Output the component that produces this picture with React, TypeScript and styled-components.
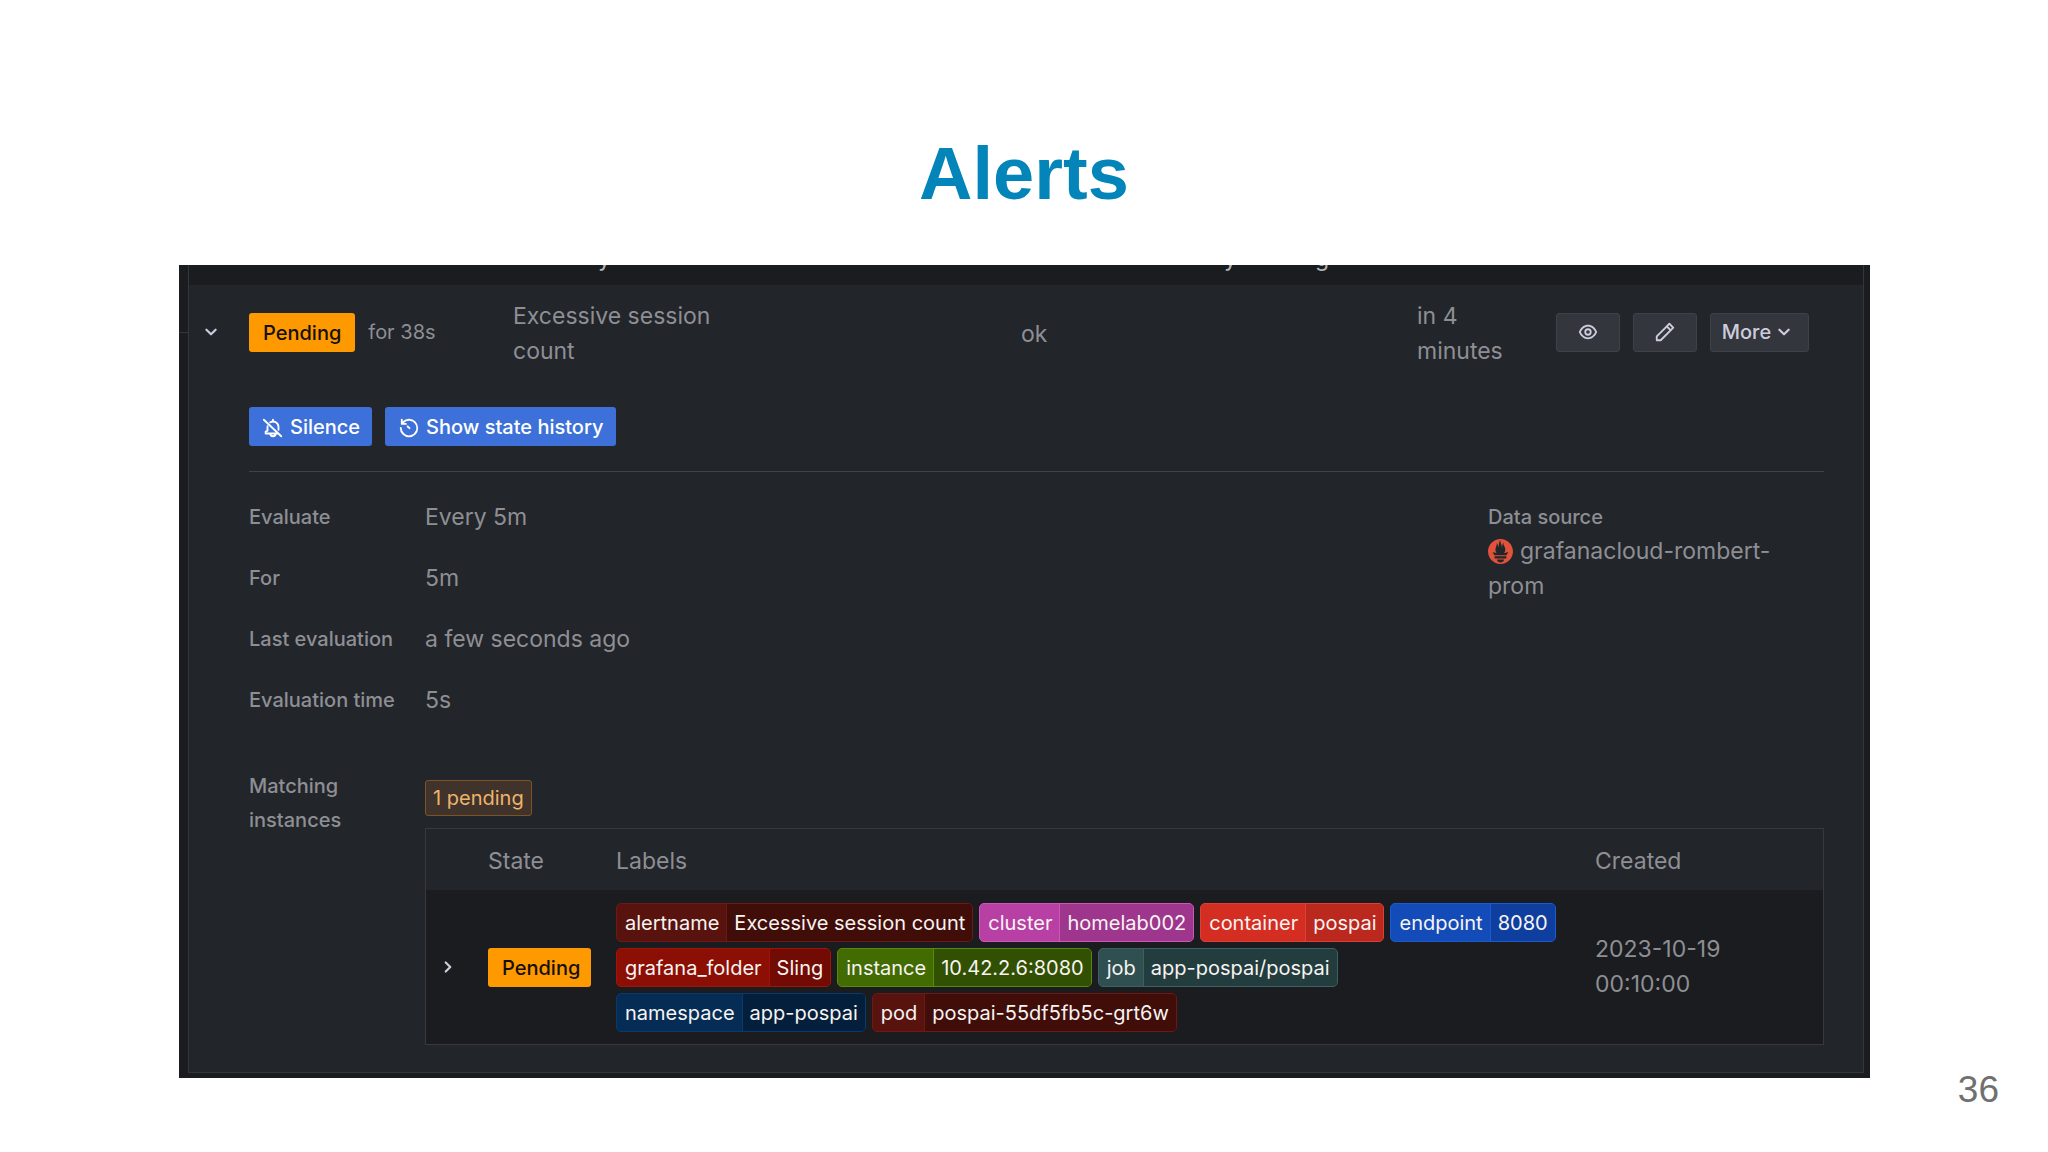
import React from "react";
import styled, { createGlobalStyle, css } from "styled-components";
import { SiPrometheus } from "react-icons/si";

const GlobalStyle = createGlobalStyle`
  *, *::before, *::after { box-sizing: border-box; }
  body { margin: 0; background: #ffffff; }
  button { font: inherit; margin: 0; cursor: pointer; }
`;

const dark = "#1a1c1f";
const panel = "#22252a";
const line = "#33363b";
const muted = "#8e8f94";

const Slide = styled.main`
  display: flex;
  flex-direction: column;
  min-height: 100vh;
  padding-top: 130px;
  background: #ffffff;
  overflow: hidden;
`;

const Title = styled.h1`
  margin: 0 0 47px;
  text-align: center;
  font: 700 74px/88px "Liberation Sans", Arial, sans-serif;
  color: #0385b9;
`;

const Capture = styled.section`
  margin: 0 178px 0 179px;
  padding: 0 6px 5px 0;
  display: grid;
  grid-template-columns: 9px 1fr;
  background: ${dark};
  color: ${muted};
  font: 400 23px/35px Inter, sans-serif;
`;

const Guide = styled.div`
  padding-top: 67px;
  &::before {
    content: "";
    display: block;
    border-top: 1px solid ${line};
  }
`;

const RuleGroup = styled.div`
  border: 1px solid ${line};
  border-top: 0;
`;

const columns = css`
  display: grid;
  grid-template-columns: 60px 264px 216px 292px 1fr 139px 307px;
`;

const CutRow = styled.div`
  ${columns}
  height: 20px;
  overflow: hidden;
  line-height: 20px;
  color: #b4b5bd;
`;

const CutText = styled.div<{ $indent: number }>`
  display: flex;
  gap: 78px;
  margin-top: -17px;
  padding-left: ${(p) => p.$indent}px;
`;

const Expanded = styled.div`
  background: ${panel};
  padding-bottom: 27px;
`;

const RuleRow = styled.div`
  ${columns}
  align-items: center;
  padding: 10px 0 14px;
`;

const TextCell = styled.div`
  padding-top: 4px;
`;

const IconButton = styled.button`
  display: inline-flex;
  align-items: center;
  justify-content: center;
  padding: 0;
  border: 0;
  background: none;
  color: #ccccdc;
`;

const ToggleCell = styled.div`
  display: flex;
  padding-left: 9px;
`;

const StateCell = styled.div`
  display: flex;
  align-items: center;
  gap: 13px;
  font-size: 20px;
`;

const StateTag = styled.span<{ $tight?: boolean }>`
  display: inline-block;
  padding: 2px ${(p) => (p.$tight ? 11 : 14)}px 0 14px;
  height: 39px;
  border-radius: 3px;
  background: #ff9900;
  color: #15110a;
  font-weight: 500;
  font-size: 20px;
  line-height: 37px;
  vertical-align: middle;
`;

const Actions = styled.div`
  display: flex;
  gap: 13px;
`;

const SecondaryButton = styled.button<{ $wide?: boolean }>`
  display: inline-flex;
  align-items: center;
  justify-content: center;
  width: ${(p) => (p.$wide ? 99 : 64)}px;
  height: 39px;
  padding: 0;
  border: 1px solid #3f4148;
  border-radius: 3px;
  background: #34363d;
  color: #ccccdc;
  font-weight: 500;
  font-size: 20px;
`;

const Body = styled.div`
  padding: 24px 39px 0 60px;
`;

const Toolbar = styled.div`
  display: flex;
  gap: 13px;
  padding-bottom: 25px;
  border-bottom: 1px solid #404247;
`;

const PrimaryButton = styled.button`
  display: inline-flex;
  align-items: center;
  gap: 6px;
  height: 39px;
  padding: 2px 12px 0 13px;
  border: 0;
  border-radius: 3px;
  background: #3d71d9;
  color: #ffffff;
  font-weight: 500;
  font-size: 20px;
  line-height: 37px;
`;

const Details = styled.div`
  display: grid;
  grid-template-columns: 1fr 336px;
  padding-top: 28px;
`;

const Facts = styled.dl`
  display: grid;
  gap: 26px;
  margin: 0;
`;

const Fact = styled.div`
  display: grid;
  grid-template-columns: 176px 1fr;
`;

const Term = styled.dt`
  font-weight: 500;
  font-size: 20px;
  line-height: 34px;
`;

const Value = styled.dd`
  margin: 0;
`;

const Source = styled.dl`
  margin: 0;
`;

const SourceValue = styled.dd`
  margin: 0;
  max-width: 300px;
  svg {
    margin-right: 7px;
    vertical-align: -5px;
    color: #e0523a;
  }
`;

const Instances = styled.div`
  display: grid;
  grid-template-columns: 176px minmax(0, 1fr);
  padding-top: 51px;
`;

const InstancesLabel = styled.div`
  max-width: 110px;
  font-weight: 500;
  font-size: 20px;
  line-height: 34px;
`;

const CountBadge = styled.span`
  display: block;
  width: max-content;
  margin: 11px 0 12px;
  padding: 1px 7px 0;
  border: 1px solid #7d5427;
  border-radius: 3px;
  background: #3f332b;
  color: #f0b36c;
  font-size: 20px;
  line-height: 33px;
`;

const Table = styled.table`
  width: 100%;
  border: 1px solid #37393e;
  border-collapse: separate;
  border-spacing: 0;
  table-layout: fixed;
`;

const HeadCell = styled.th<{ $width?: number }>`
  width: ${(p) => (p.$width ? `${p.$width}px` : "auto")};
  height: 61px;
  padding: 3px 0 0;
  text-align: left;
  font-weight: 400;
`;

const Cell = styled.td`
  height: 154px;
  padding: 0;
  background: ${dark};
  vertical-align: middle;
`;

const Stamp = styled.time`
  display: block;
  max-width: 140px;
`;

const TagList = styled.ul`
  display: flex;
  flex-wrap: wrap;
  gap: 6px;
  max-width: 950px;
  margin: 0;
  padding: 0;
  list-style: none;
`;

const Tag = styled.li<{ $fill: string; $edge: string }>`
  display: flex;
  height: 39px;
  overflow: hidden;
  border: 1px solid ${(p) => p.$edge};
  border-radius: 5px;
  background: ${(p) => p.$fill};
  color: #f7f4f2;
  font-size: 20px;
  line-height: 38px;
  white-space: nowrap;
`;

const TagKey = styled.span`
  padding: 0 7px 0 8px;
`;

const TagValue = styled.span<{ $fill: string; $edge: string }>`
  padding: 0 7px;
  border-left: 1px solid ${(p) => p.$edge};
  background: ${(p) => p.$fill};
`;

const PageNumber = styled.footer`
  padding-right: 49px;
  text-align: right;
  font: 400 37px/24px "Liberation Sans", Arial, sans-serif;
  color: #707070;
`;

const Glyph = ({ d, size = 22 }: { d: string; size?: number }) => (
  <svg width={size} height={size} viewBox="0 0 24 24" fill="currentColor" aria-hidden="true">
    <path d={d} />
  </svg>
);

const angleDown =
  "M17,9.17a1,1,0,0,0-1.41,0L12,12.71,8.46,9.17a1,1,0,0,0-1.41,0,1,1,0,0,0,0,1.42l4.24,4.24a1,1,0,0,0,1.42,0L17,10.59A1,1,0,0,0,17,9.17Z";
const angleRight =
  "M14.83,11.29,10.59,7.05a1,1,0,0,0-1.42,0,1,1,0,0,0,0,1.41L12.71,12,9.17,15.54a1,1,0,0,0,0,1.41,1,1,0,0,0,.71.29,1,1,0,0,0,.71-.29l4.24-4.24A1,1,0,0,0,14.83,11.29Z";
const eye =
  "M21.92,11.6C19.9,6.91,16.1,4,12,4S4.1,6.91,2.08,11.6a1,1,0,0,0,0,.8C4.1,17.09,7.9,20,12,20s7.9-2.91,9.92-7.6A1,1,0,0,0,21.92,11.6ZM12,18c-3.17,0-6.17-2.29-7.9-6C5.83,8.29,8.83,6,12,6s6.17,2.29,7.9,6C18.17,15.71,15.17,18,12,18ZM12,8a4,4,0,1,0,4,4A4,4,0,0,0,12,8Zm0,6a2,2,0,1,1,2-2A2,2,0,0,1,12,14Z";
const pen =
  "M22,7.24a1,1,0,0,0-.29-.71L17.47,2.29A1,1,0,0,0,16.76,2a1,1,0,0,0-.71.29L13.22,5.12h0L2.29,16.05a1,1,0,0,0-.29.71V21a1,1,0,0,0,1,1H7.24A1,1,0,0,0,8,21.71L18.87,10.78h0L21.71,8a1.19,1.19,0,0,0,.22-.33,1,1,0,0,0,0-.24.7.7,0,0,0,0-.14ZM6.83,20H4V17.17l9.93-9.93,2.83,2.83ZM18.17,8.66,15.34,5.83l1.42-1.41,2.82,2.82Z";
const history =
  "M12,2A10,10,0,0,0,5.12,4.77V3a1,1,0,0,0-2,0V7.5a1,1,0,0,0,1,1H8.62a1,1,0,0,0,0-2H6.22A8,8,0,1,1,4,12a1,1,0,0,0-2,0A10,10,0,1,0,12,2ZM10.2,9.4a1,1,0,0,0-.4,1.7l2,1.8a1,1,0,0,0,1.4-1.5l-2-1.8a1,1,0,0,0-1-.2Z";

const BellSlash = () => (
  <svg
    width="22"
    height="22"
    viewBox="0 0 24 24"
    fill="none"
    stroke="currentColor"
    strokeWidth="2"
    strokeLinecap="round"
    strokeLinejoin="round"
    aria-hidden="true"
  >
    <path d="M2 3l19 18M12 3v2M9 5.8A6 6 0 0 1 18 11v3M6 10v5l-2 1v2h13M9 18a3 3 0 0 0 6 0" />
  </svg>
);

const facts = [
  ["Evaluate", "Every 5m"],
  ["For", "5m"],
  ["Last evaluation", "a few seconds ago"],
  ["Evaluation time", "5s"],
];

const tags = [
  { k: "alertname", v: "Excessive session count", key: "#58130e", value: "#410d09", edge: "#6e1a12" },
  { k: "cluster", v: "homelab002", key: "#b83fa3", value: "#9f368d", edge: "#cb58b7" },
  { k: "container", v: "pospai", key: "#d42d22", value: "#bb281e", edge: "#de4035" },
  { k: "endpoint", v: "8080", key: "#134cb8", value: "#0f3f9e", edge: "#1b5ad0" },
  { k: "grafana_folder", v: "Sling", key: "#8b0f04", value: "#720b03", edge: "#a31408" },
  { k: "instance", v: "10.42.2.6:8080", key: "#426b02", value: "#315001", edge: "#588c08" },
  { k: "job", v: "app-pospai/pospai", key: "#2f4f50", value: "#233d3e", edge: "#3d6163" },
  { k: "namespace", v: "app-pospai", key: "#052c54", value: "#041f3c", edge: "#0a3a6c" },
  { k: "pod", v: "pospai-55df5fb5c-grt6w", key: "#58130e", value: "#410d09", edge: "#701816" },
];

export default function App() {
  return (
    <>
      <GlobalStyle />
      <Slide>
        <Title>Alerts</Title>
        <Capture aria-label="Alert rule">
          <Guide />
          <RuleGroup>
            <CutRow aria-hidden="true">
              <span />
              <span />
              <CutText $indent={85}>y</CutText>
              <span />
              <CutText $indent={203}>
                <span>y</span>
                <span>g</span>
              </CutText>
              <span />
              <span />
            </CutRow>
            <Expanded>
              <RuleRow>
                <ToggleCell>
                  <IconButton aria-label="Collapse rule" aria-expanded="true">
                    <Glyph d={angleDown} size={26} />
                  </IconButton>
                </ToggleCell>
                <StateCell>
                  <StateTag>Pending</StateTag>
                  <span>for 38s</span>
                </StateCell>
                <TextCell>Excessive session count</TextCell>
                <TextCell />
                <TextCell>ok</TextCell>
                <TextCell>in 4<br />minutes</TextCell>
                <Actions>
                  <SecondaryButton aria-label="View">
                    <Glyph d={eye} />
                  </SecondaryButton>
                  <SecondaryButton aria-label="Edit">
                    <Glyph d={pen} />
                  </SecondaryButton>
                  <SecondaryButton $wide>
                    More
                    <Glyph d={angleDown} size={26} />
                  </SecondaryButton>
                </Actions>
              </RuleRow>
              <Body>
                <Toolbar>
                  <PrimaryButton>
                    <BellSlash />
                    Silence
                  </PrimaryButton>
                  <PrimaryButton>
                    <Glyph d={history} />
                    Show state history
                  </PrimaryButton>
                </Toolbar>
                <Details>
                  <Facts>
                    {facts.map(([term, value]) => (
                      <Fact key={term}>
                        <Term>{term}</Term>
                        <Value>{value}</Value>
                      </Fact>
                    ))}
                  </Facts>
                  <Source>
                    <Term>Data source</Term>
                    <SourceValue>
                      <SiPrometheus size={25} aria-hidden="true" />
                      grafanacloud-rombert-prom
                    </SourceValue>
                  </Source>
                </Details>
                <Instances>
                  <InstancesLabel>Matching instances</InstancesLabel>
                  <div>
                    <CountBadge>1 pending</CountBadge>
                    <Table>
                      <thead>
                        <tr>
                          <HeadCell $width={62} aria-label="Expand" />
                          <HeadCell $width={128}>State</HeadCell>
                          <HeadCell>Labels</HeadCell>
                          <HeadCell $width={228}>Created</HeadCell>
                        </tr>
                      </thead>
                      <tbody>
                        <tr>
                          <Cell>
                            <ToggleCell>
                              <IconButton aria-label="Expand instance" aria-expanded="false">
                                <Glyph d={angleRight} size={26} />
                              </IconButton>
                            </ToggleCell>
                          </Cell>
                          <Cell>
                            <StateTag $tight>Pending</StateTag>
                          </Cell>
                          <Cell>
                            <TagList>
                              {tags.map((t) => (
                                <Tag key={t.k} $fill={t.key} $edge={t.edge}>
                                  <TagKey>{t.k}</TagKey>
                                  <TagValue $fill={t.value} $edge={t.edge}>{t.v}</TagValue>
                                </Tag>
                              ))}
                            </TagList>
                          </Cell>
                          <Cell>
                            <Stamp>2023-10-19 00:10:00</Stamp>
                          </Cell>
                        </tr>
                      </tbody>
                    </Table>
                  </div>
                </Instances>
              </Body>
            </Expanded>
          </RuleGroup>
        </Capture>
        <PageNumber>36</PageNumber>
      </Slide>
    </>
  );
}
